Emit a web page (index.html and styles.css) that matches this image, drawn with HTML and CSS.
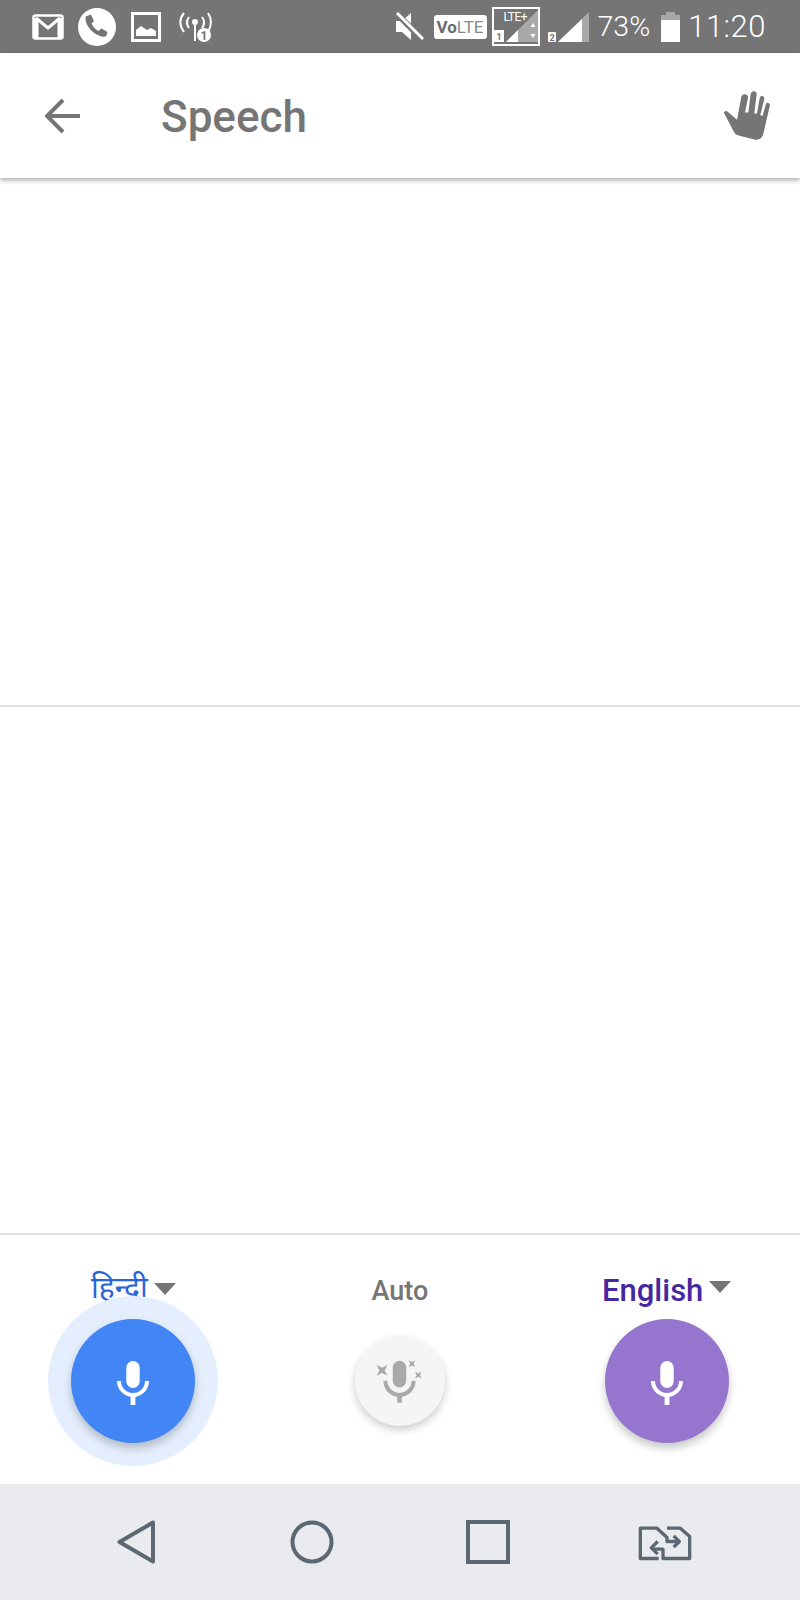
FILE: index.html
```html
<!DOCTYPE html>
<html lang="en">
<head>
    <meta charset="UTF-8">
    <title>Speech</title>
    <link rel="stylesheet" href="styles.css">
</head>
<body>
    <div class="screen">
        <div class="status-bar">
            <div class="status-left">
                <svg class="ic-gmail" viewBox="0 0 32 26"><rect x="1.500" y="1.500" width="29" height="23" rx="2" fill="none" stroke="#fff" stroke-width="2.500"/><path d="M4 4l12 10L28 4" fill="none" stroke="#fff" stroke-width="3"/><rect x="2" y="4" width="4.500" height="20" fill="#fff"/><rect x="25.500" y="4" width="4.500" height="20" fill="#fff"/></svg>
                <svg class="ic-phone" viewBox="0 0 38 38"><circle cx="19" cy="19" r="19" fill="#fff"/><path d="M9 8l4-1.500 3 6.500-2.500 2.500c1.500 3.500 3.500 5.500 7 7.500l3-2.500 6 3.500-1 3.500c-1 1.500-3 1.500-5 1-9-2.500-15-10-16-17-.2-2 .2-3.500 1.500-3.500z" fill="#757575"/></svg>
                <svg class="ic-image" viewBox="0 0 30 30"><rect x="1.500" y="1.500" width="27" height="27" fill="none" stroke="#fff" stroke-width="3"/><path d="M5 24v-6l5-4 6 4 4-2 5 3v5z" fill="#fff"/></svg>
                <svg class="ic-hotspot" viewBox="0 0 34 31"><g fill="none" stroke="#fff" stroke-width="2"><path d="M6 2C1 8 1 14 6 21"/><path d="M11 6c-3 4-3 7 0 11"/><path d="M30 2c4 6 4 12 0 19"/><path d="M24 6c3 4 3 7 0 11"/><path d="M17 14v16"/></g><circle cx="17" cy="11" r="3" fill="#fff"/><circle cx="26" cy="24" r="7" fill="#fff"/><text x="26" y="28.500" class="badge-num">1</text></svg>
            </div>
            <div class="status-right">
                <svg class="ic-mute" viewBox="0 0 28 29"><path d="M0 9h6l9-8v27l-9-8H0z" fill="#fff"/><path d="M1 2l26 26" stroke="#757575" stroke-width="6"/><path d="M1 1l26 26" stroke="#fff" stroke-width="3"/></svg>
                <div class="volte"><b>Vo</b>LTE</div>
                <div class="lte-box">
                    <svg class="lte-signal" viewBox="0 0 44 35"><path d="M12 33L44 1v32z" fill="#a8a8a8"/><path d="M12 33l12-12v12z" fill="#fff"/><rect x="0" y="21" width="10" height="12" fill="#fff"/><text x="5" y="31" class="sim-num">1</text><path d="M39 14l2.500 4h-5zM39 29l2.500-4h-5z" fill="#fff"/></svg>
                    <span class="lte-text">LTE+</span>
                </div>
                <svg class="ic-signal" viewBox="0 0 41 30"><rect x="0" y="20" width="8" height="10" rx="1" fill="#fff"/><text x="4" y="28.500" class="sim-num">2</text><path d="M10 30L41 0v30z" fill="#a8a8a8"/><path d="M10 30L34 7v23z" fill="#fff"/></svg>
                <span class="pct">73%</span>
                <svg class="ic-battery" viewBox="0 0 19 30"><rect x="5" y="0" width="9" height="3" fill="#a8a8a8"/><rect x="0" y="3" width="19" height="6" fill="#a8a8a8"/><rect x="0" y="8" width="19" height="22" fill="#fff"/></svg>
                <span class="clock">11:20</span>
            </div>
        </div>

        <div class="toolbar">
            <svg class="ic-back" viewBox="0 0 36 36"><path d="M35 18H3M18 2L2 18l16 16" fill="none" stroke="#757575" stroke-width="4"/></svg>
            <div class="toolbar-title">Speech</div>
            <svg class="ic-hand" viewBox="128 60 144 154"><path d="M130 128Q134 122 140 124L170 150 183 80Q186 72 194 73 204 75 203 84L194 128 204 128 211 72Q213 63 221 64 230 65 229 74L222 130 230 132 238 86Q240 76 248 78 253 80 252 88L240 136 247 138 257 103Q259 97 265 99 270 101 269 107L250 190Q245 212 225 210L172 197Q165 195 160 185Z" fill="#757575"/></svg>
        </div>

        <div class="panel"></div>
        <div class="panel"></div>

        <div class="speech-controls">
            <div class="lang-col">
                <div class="lang-label lang-hindi">हिन्दी<i class="caret"></i></div>
                <div class="mic-slot">
                    <div class="mic-btn mic-blue">
                        <svg class="ic-mic" viewBox="0 0 32 44"><rect x="9.300" y="0" width="13.400" height="27" rx="6.700" fill="#fff"/><path d="M2 20a14 14 0 0 0 28 0" fill="none" stroke="#fff" stroke-width="4"/><rect x="13.600" y="32" width="4.800" height="12" fill="#fff"/></svg>
                    </div>
                </div>
            </div>
            <div class="lang-col">
                <div class="lang-label lang-auto">Auto</div>
                <div class="mic-slot">
                    <div class="mic-btn mic-auto">
                        <svg class="ic-mic-auto" viewBox="140 290 140 140"><rect x="190" y="298" width="40" height="80" rx="20" fill="#a9a9a9"/><path d="M168 358a42 42 0 0 0 84 0" fill="none" stroke="#a9a9a9" stroke-width="12"/><rect x="203" y="395" width="14" height="28" fill="#a9a9a9"/><path d="M142 311l16 8 16-8-8 16 8 16-16-8-16 8 8-16z" fill="#a9a9a9"/><path d="M237 297l10 5 10-5-5 10 5 10-10-5-10 5 5-10z" fill="#a9a9a9"/><path d="M256 331l10 5 10-5-5 10 5 10-10-5-10 5 5-10z" fill="#a9a9a9"/></svg>
                    </div>
                </div>
            </div>
            <div class="lang-col">
                <div class="lang-label lang-english">English<i class="caret"></i></div>
                <div class="mic-slot">
                    <div class="mic-btn mic-purple">
                        <svg class="ic-mic" viewBox="0 0 32 44"><rect x="9.300" y="0" width="13.400" height="27" rx="6.700" fill="#fff"/><path d="M2 20a14 14 0 0 0 28 0" fill="none" stroke="#fff" stroke-width="4"/><rect x="13.600" y="32" width="4.800" height="12" fill="#fff"/></svg>
                    </div>
                </div>
            </div>
        </div>

        <div class="nav-bar">
            <svg class="nav-back" viewBox="0 0 38 44"><path d="M2.500 22L36 2.500v39z" fill="none" stroke="#5b6871" stroke-width="4" stroke-linejoin="round"/></svg>
            <svg class="nav-home" viewBox="0 0 44 44"><circle cx="22" cy="22" r="19.500" fill="none" stroke="#5b6871" stroke-width="4"/></svg>
            <svg class="nav-recent" viewBox="0 0 44 44"><rect x="2" y="2" width="40" height="40" fill="none" stroke="#5b6871" stroke-width="4"/></svg>
            <svg class="nav-sim" viewBox="590 130 165 110"><g fill="none" stroke="#5b6871" stroke-width="10" stroke-linejoin="round"><path d="M655 233H600V142h50l30 28v12h35"/><path d="M680 142h40l28 25v66h-80v-28h-33"/><path d="M700 165l17 17-17 17"/><path d="M652 186l-19 19 19 19" transform="translate(0 -4)"/></g></svg>
        </div>
    </div>
</body>
</html>
```

FILE: styles.css
```css
body {
    margin: 0;
    padding: 0;
    font-family: Roboto, "Noto Sans", "Noto Sans Devanagari", sans-serif;
    background-color: #fff;
}
svg {
    display: block;
    flex-shrink: 0;
}
.screen {
    width: 800px;
    height: 1600px;
    display: flex;
    flex-direction: column;
    overflow: hidden;
}

/* status bar */
.status-bar {
    height: 53px;
    background-color: #757575;
    color: #fff;
    display: flex;
    align-items: center;
    justify-content: space-between;
    padding: 0 34px 0 32px;
}
.status-left,
.status-right {
    display: flex;
    align-items: center;
}
.ic-gmail { width: 32px; height: 26px; }
.ic-phone { width: 38px; height: 38px; margin-left: 14px; }
.ic-image { width: 30px; height: 30px; margin-left: 15px; }
.ic-hotspot { width: 34px; height: 31px; margin-left: 17px; }
.badge-num {
    font-size: 12px;
    font-weight: 700;
    fill: #757575;
    text-anchor: middle;
}
.ic-mute { width: 28px; height: 29px; }
.volte {
    width: 53px;
    height: 24px;
    margin-left: 10px;
    background-color: #fff;
    border-radius: 3px;
    color: #8a8a8a;
    font-size: 17px;
    line-height: 24px;
    text-align: center;
}
.volte b {
    color: #6a6a6a;
}
.lte-box {
    position: relative;
    width: 44px;
    height: 35px;
    margin-left: 5px;
    border: 2px solid #fff;
}
.lte-signal { width: 44px; height: 35px; }
.lte-text {
    position: absolute;
    top: 2px;
    left: 10px;
    font-size: 12px;
    line-height: 12px;
    letter-spacing: -0.5px;
    color: #fff;
}
.sim-num {
    font-size: 9px;
    font-weight: 700;
    fill: #757575;
    text-anchor: middle;
}
.ic-signal { width: 41px; height: 30px; margin-left: 8px; }
.pct {
    margin-left: 9px;
    font-size: 28.5px;
    font-weight: 300;
}
.ic-battery { width: 19px; height: 30px; margin-left: 11px; }
.clock {
    margin-left: 8px;
    font-size: 31px;
    font-weight: 300;
    letter-spacing: 0.5px;
}

/* toolbar */
.toolbar {
    position: relative;
    height: 125px;
    display: flex;
    align-items: center;
    padding: 0 29px 0 45px;
    background-color: #fff;
    box-shadow: 0 2px 5px rgba(0, 0, 0, 0.35);
}
.ic-back { width: 36px; height: 36px; }
.toolbar-title {
    flex-grow: 1;
    margin: 2px 0 0 80px;
    font-size: 44px;
    font-weight: 500;
    color: #757575;
}
.ic-hand { width: 48px; height: 51px; }

/* text panels */
.panel {
    flex-grow: 1;
    border-bottom: 2px solid #e2e2e2;
}

/* language and mic row */
.speech-controls {
    height: 249px;
    display: grid;
    grid-template-columns: repeat(3, 1fr);
    box-sizing: border-box;
    padding-top: 35px;
}
.lang-col {
    display: flex;
    flex-direction: column;
    align-items: center;
}
.lang-label {
    height: 40px;
    display: flex;
    align-items: center;
    font-weight: 500;
}
.lang-hindi {
    height: 32px;
    padding-bottom: 8px;
    font-size: 30px;
    font-weight: 400;
    color: #2a66d9;
}
.lang-auto {
    font-size: 27px;
    padding-top: 2px;
    height: 38px;
    color: #757575;
}
.lang-english {
    font-size: 31px;
    color: #4527a0;
}
.caret {
    width: 0;
    height: 0;
    margin: 0 0 6px 6px;
    border-left: 11px solid transparent;
    border-right: 11px solid transparent;
    border-top: 12px solid #757575;
}
.lang-hindi .caret {
    margin: 0 0 0 6px;
    transform: translateY(3px);
}
.mic-slot {
    height: 124px;
    margin-top: 9px;
    display: flex;
    align-items: center;
}
.mic-btn {
    position: relative;
    border-radius: 50%;
    display: flex;
    align-items: center;
    justify-content: center;
}
.mic-blue {
    width: 124px;
    height: 124px;
    background-color: #4285f4;
    box-shadow: 0 5px 9px rgba(0, 0, 0, 0.22), 0 0 0 23px #e4eefd;
}
.mic-purple {
    width: 124px;
    height: 124px;
    background-color: #9575cd;
    box-shadow: 0 5px 9px rgba(0, 0, 0, 0.22);
}
.mic-auto {
    width: 90px;
    height: 90px;
    background-color: #f5f5f5;
    box-shadow: 0 4px 8px rgba(0, 0, 0, 0.2);
}
.ic-mic { width: 32px; height: 44px; margin-top: 4px; }
.ic-mic-auto { width: 47px; height: 47px; }

/* android nav bar */
.nav-bar {
    height: 116px;
    background-color: #e9ebef;
    display: flex;
    align-items: center;
    padding-left: 117px;
}
.nav-back { width: 38px; height: 44px; }
.nav-home { width: 44px; height: 44px; margin-left: 135px; }
.nav-recent { width: 44px; height: 44px; margin-left: 132px; }
.nav-sim { width: 55px; height: 37px; margin-left: 127px; }
```
